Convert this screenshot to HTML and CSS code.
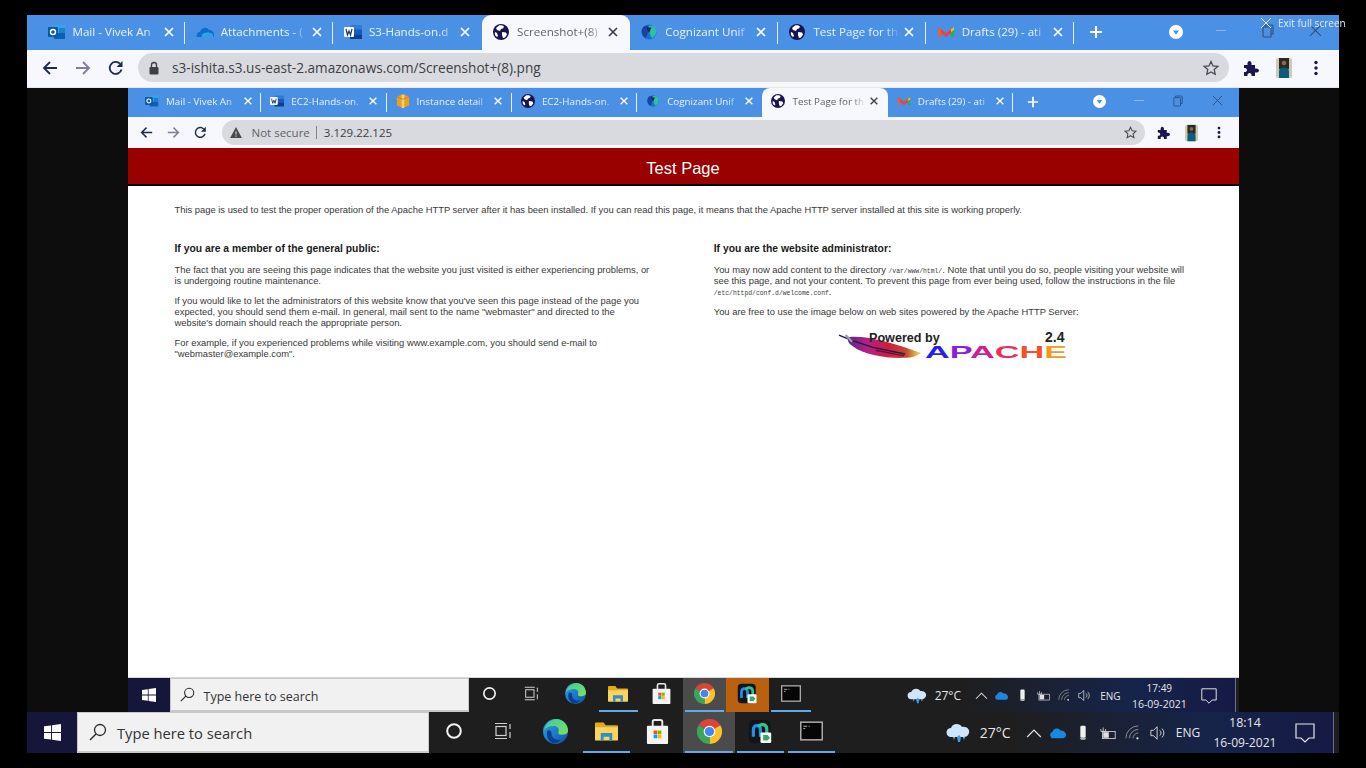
FILE: index.html
```html
<!DOCTYPE html>
<html lang="en">
<head>
<meta charset="utf-8">
<title>Screenshot+(8).png</title>
<link rel="stylesheet" href="styles.css">
</head>
<body>
<svg class="defs" aria-hidden="true">
  <defs>
    <linearGradient id="g-edge" x1="0" y1="0" x2="1" y2="1"><stop offset="0" stop-color="#2ba5e0"/><stop offset=".55" stop-color="#1c78c8"/><stop offset="1" stop-color="#0f4f9e"/></linearGradient>
    <linearGradient id="g-edge2" x1="0" y1="0" x2="1" y2="1"><stop offset="0" stop-color="#3fc9a8"/><stop offset="1" stop-color="#7fe05a"/></linearGradient>
    <linearGradient id="g-feather" x1="0" y1="0" x2="1" y2="0"><stop offset="0" stop-color="#5a2a80"/><stop offset=".25" stop-color="#b0208a"/><stop offset=".55" stop-color="#d01c3c"/><stop offset=".8" stop-color="#c84a30"/><stop offset=".92" stop-color="#d8b040"/><stop offset="1" stop-color="#e0d890"/></linearGradient>
    <symbol id="i-x" viewBox="0 0 12 12"><path d="M2 2l8 8M10 2l-8 8" fill="none" stroke="currentColor" stroke-width="1.7"/></symbol>
    <symbol id="i-thin-x" viewBox="0 0 12 12"><path d="M1 1l10 10M11 1L1 11" fill="none" stroke="currentColor" stroke-width="1"/></symbol>
    <symbol id="i-plus" viewBox="0 0 14 14"><path d="M7 1v12M1 7h12" fill="none" stroke="currentColor" stroke-width="2"/></symbol>
    <symbol id="i-outlook" viewBox="0 0 18 16"><rect x="6" y="1" width="11" height="14" rx="1" fill="#38a5e8"/><rect x="11" y="4" width="6" height="5" fill="#1c7fd0"/><rect x="6" y="9" width="11" height="6" fill="#0f5fb0"/><rect x="0" y="3" width="10" height="10" rx="1" fill="#0c5aa6"/><circle cx="5" cy="8" r="2.5" fill="none" stroke="#fff" stroke-width="1.4"/></symbol>
    <symbol id="i-onedrive" viewBox="0 0 18 16"><path d="M1 13c-1-3 1-5 3-5 1-4 6-6 9-2 3 0 5 2 5 5 0 1-.4 2-1 2z" fill="#0f6cc8"/><path d="M6 13c-1-2 1-4 3-4 2-1 4-1 5 0 2 0 4 2 3 4z" fill="#2fa1e6"/></symbol>
    <symbol id="i-word" viewBox="0 0 18 16"><rect x="6" y="1" width="12" height="14" rx="1" fill="#2b7cd3"/><rect x="6" y="5.5" width="12" height="5" fill="#185abd"/><rect x="6" y="10.5" width="12" height="4.5" fill="#103f91"/><rect x="0" y="3" width="10" height="10" rx="1" fill="#fff"/><path d="M2 5l1.5 6L5 7l1.500 4L8 5" fill="none" stroke="#10357f" stroke-width="1.2"/></symbol>
    <symbol id="i-globe" viewBox="0 0 16 16"><circle cx="8" cy="8" r="8" fill="#17144f"/><path d="M6 1.500c2-.5 4 0 5 1l-1 2-2 .5-1 2-3-1-1-2zM9 8l4 .5 1 2-2 3-2 .500-1-3zM2 8l2 1 1 3-1 1c-2-1-2.500-3-2-5z" fill="#fff"/></symbol>
    <symbol id="i-cognizant" viewBox="0 0 18 16"><circle cx="9" cy="8" r="7.500" fill="#1f6fd0"/><path d="M2 5c1-3 4-4 6-3 1 3 0 8-2 12-3-1-5-5-4-9z" fill="#17459c"/><path d="M9 2c3-1 6 0 7 3 1 4-1 8-4 9-2-3-4-8-3-12z" fill="#2fc0a0"/><path d="M6.500 3.500h5L9 9z" fill="#10205a"/></symbol>
    <symbol id="i-gmail" viewBox="0 0 18 16"><path d="M1 3l8 6 8-6v4l-8 6-8-6z" fill="#ea4335"/><path d="M1 3v10h3V5.300z" fill="#e8603a"/><path d="M17 3v10h-3V5.300z" fill="#34a853"/><path d="M14 5.300L17 3v3l-3 2z" fill="#fbbc04"/></symbol>
    <symbol id="i-aws" viewBox="0 0 16 16"><path d="M8 0l7 3v10l-7 3-7-3V3z" fill="#e8a020"/><path d="M6.500 1v15h3V1z" fill="#f6d070"/><path d="M1 3l7 3 7-3" fill="none" stroke="#c8801a"/></symbol>
    <symbol id="i-back" viewBox="0 0 16 16"><path d="M15 8H2M8 2L2 8l6 6" fill="none" stroke="currentColor" stroke-width="1.800"/></symbol>
    <symbol id="i-fwd" viewBox="0 0 16 16"><path d="M1 8h13M8 2l6 6-6 6" fill="none" stroke="currentColor" stroke-width="1.800"/></symbol>
    <symbol id="i-reload" viewBox="0 0 16 16"><path d="M13.500 9.500A6 6 0 1 1 12 3.700" fill="none" stroke="currentColor" stroke-width="1.800"/><path d="M14.500 1v6h-6z" fill="currentColor"/></symbol>
    <symbol id="i-lock" viewBox="0 0 12 14"><rect x="1.500" y="6" width="9" height="7.500" rx="1" fill="currentColor"/><path d="M3.500 6V4a2.500 2.500 0 0 1 5 0v2" fill="none" stroke="currentColor" stroke-width="1.300"/></symbol>
    <symbol id="i-warn" viewBox="0 0 14 13"><path d="M7 0l7 13H0z" fill="currentColor"/><path d="M7 5v4M7 10v1.500" stroke="#d9dadf" stroke-width="1.200"/></symbol>
    <symbol id="i-star" viewBox="0 0 16 16"><path d="M8 1.500l2 4.400 4.800.5-3.600 3.200 1 4.700L8 11.900l-4.200 2.400 1-4.700L1.200 6.400 6 5.900z" fill="none" stroke="currentColor" stroke-width="1.300"/></symbol>
    <symbol id="i-puzzle" viewBox="0 0 16 16"><path d="M1 5h3.500C4 2 5.500 1 6.500 1S9 2 8.500 5H12v3.500c3-.5 4 1 4 2s-1 2.500-4 2V16H8.500c.5-2-1-3-2-3s-2.500 1-2 3H1v-4c2 .5 3-1 3-2S3 7.500 1 8z" fill="#1e1450"/></symbol>
    <symbol id="i-avatar" viewBox="0 0 16 20"><rect width="16" height="20" rx="2" fill="#cfcab2"/><rect x="3" y="0" width="10" height="11" fill="#2c2a20"/><circle cx="8" cy="5" r="2.300" fill="#8a6a54"/><path d="M3 20v-7c0-2 2-3.500 5-3.500s5 1.500 5 3.500v7z" fill="#0f5a80"/></symbol>
    <symbol id="i-dots" viewBox="0 0 4 16"><circle cx="2" cy="2.500" r="1.700" fill="#1e1450"/><circle cx="2" cy="8" r="1.700" fill="#1e1450"/><circle cx="2" cy="13.500" r="1.700" fill="#1e1450"/></symbol>
    <symbol id="i-down" viewBox="0 0 14 14"><circle cx="7" cy="7" r="7" fill="#fff"/><path d="M4 5.500h6L7 9.500z" fill="#4a90e5"/></symbol>
    <symbol id="i-restore" viewBox="0 0 12 14"><rect x="1" y="3" width="8" height="10" rx="1" fill="none" stroke="currentColor" stroke-width="1.100"/><path d="M3 3V1h7a1 1 0 0 1 1 1v8H9" fill="none" stroke="currentColor" stroke-width="1.100"/></symbol>
    <symbol id="i-win" viewBox="0 0 18 18"><path d="M0 2.500l7.500-1v7H0zM8.500 1.300L18 0v8.500H8.500zM0 9.500h7.500v7l-7.500-1zM8.500 9.500H18V18l-9.500-1.300z" fill="#fff"/></symbol>
    <symbol id="i-search" viewBox="0 0 18 18"><circle cx="11" cy="7" r="5.500" fill="none" stroke="#2a2a2a" stroke-width="1.300"/><path d="M7 11l-6 6" stroke="#2a2a2a" stroke-width="1.500"/></symbol>
    <symbol id="i-cortana" viewBox="0 0 18 18"><circle cx="9" cy="9" r="6.800" fill="none" stroke="#f2f2f2" stroke-width="2"/></symbol>
    <symbol id="i-taskview" viewBox="0 0 18 18"><path d="M1 1.500h12M1 16.500h12" stroke="#d0d0d0" stroke-width="1.200"/><rect x="2" y="4.500" width="10" height="9" fill="none" stroke="#d0d0d0" stroke-width="1.200"/><path d="M16 2v5M16 10v6" stroke="#d0d0d0" stroke-width="1.200"/></symbol>
    <symbol id="i-edge" viewBox="0 0 24 24"><circle cx="12" cy="12" r="12" fill="url(#g-edge)"/><path d="M1 11C3 3 9 0 13 0c6 0 11 5 11 11 0 3-3 4-6 4-3 0-4-1-3-3 1-3-2-6-6-5-4 0-7 2-8 4z" fill="url(#g-edge2)"/><path d="M8 13c0 5 4 8 9 7-2 3-5 4-8 3-4-2-6-6-5-11 1-2 4-1 4 1z" fill="#0c3f8f"/></symbol>
    <symbol id="i-folder" viewBox="0 0 24 20"><path d="M0 2a1 1 0 0 1 1-1h8l2 3h12a1 1 0 0 1 1 1v2H0z" fill="#e5a823"/><path d="M0 6h24v13a1 1 0 0 1-1 1H1a1 1 0 0 1-1-1z" fill="#fcd35e"/><path d="M6 12h12v8h-3v-4H9v4H6z" fill="#2e8fd0"/></symbol>
    <symbol id="i-store" viewBox="0 0 24 26"><path d="M7 8V3a2 2 0 0 1 2-2h6a2 2 0 0 1 2 2v5" fill="none" stroke="#e8e8e8" stroke-width="2"/><rect x="1" y="7" width="22" height="19" rx="1" fill="#f4f4f4"/><rect x="8" y="12" width="3.800" height="3.800" fill="#f25022"/><rect x="12.200" y="12" width="3.800" height="3.800" fill="#7fba00"/><rect x="8" y="16.200" width="3.800" height="3.800" fill="#00a4ef"/><rect x="12.200" y="16.200" width="3.800" height="3.800" fill="#ffb900"/></symbol>
    <symbol id="i-chrome" viewBox="0 0 24 24"><path d="M12 12L1.600 6A12 12 0 0 1 22.400 6z" fill="#db4437"/><path d="M12 12L22.400 6A12 12 0 0 1 12 24z" fill="#fbc02d"/><path d="M12 12L12 24A12 12 0 0 1 1.600 6z" fill="#3aa757"/><circle cx="12" cy="12" r="5.600" fill="#fff"/><circle cx="12" cy="12" r="4.400" fill="#4285f4"/></symbol>
    <symbol id="i-webex" viewBox="0 0 26 28"><rect y="1" width="24" height="26" rx="5" fill="#141418"/><path d="M5 20V12c0-6 8-6 8 0v8" fill="none" stroke="#1f8fe8" stroke-width="3.600"/><path d="M11 9c1-4 9-4 9 2v5" fill="none" stroke="#2fc48e" stroke-width="3.600"/><rect x="13" y="15" width="12" height="12" rx="1.500" fill="#fff"/><path d="M16 18h5l2.500 3-2.500 3h-5z" fill="#2faa68"/></symbol>
    <symbol id="i-cmd" viewBox="0 0 24 20"><rect x=".8" y=".8" width="22.400" height="18.400" fill="#060606" stroke="#a8a8a8" stroke-width="1.600"/><path d="M3.500 5h4M9 5h1M3.500 7.500h2" stroke="#bdbdbd"/></symbol>
    <symbol id="i-weather" viewBox="0 0 24 22"><path d="M5 15a4.500 4.500 0 0 1 0-9c1-4 8-6 11-1 5-1 8 3 7 6-1 3-3 4-5 4z" fill="#cfe6fa"/><path d="M11 15l2-2 2 2-1 5h-2z" fill="#3f9be8"/><path d="M7 15h2l-1 3zM17 15h2l-1 3z" fill="#6fb4ee"/></symbol>
    <symbol id="i-caret" viewBox="0 0 14 9"><path d="M1 8l6-6 6 6" fill="none" stroke="#e0e0e0" stroke-width="1.100"/></symbol>
    <symbol id="i-cloud" viewBox="0 0 20 13"><path d="M4 13a4 4 0 0 1-1-7.800C4 1 10-1 13 3.500c4-.5 7 2.500 7 5.500 0 2.500-2 4-4 4z" fill="#1d87e0"/></symbol>
    <symbol id="i-usb" viewBox="0 0 10 24"><rect x="1" y="1" width="8" height="18" rx="2" fill="#f0f0f0"/><path d="M0 19h10l-2 3H2z" fill="#b8b8b8"/></symbol>
    <symbol id="i-battery" viewBox="0 0 20 16"><path d="M4 1v5M1 3v3h6V3" stroke="#e0e0e0" fill="none"/><rect x="3" y="6" width="16" height="9" fill="none" stroke="#e0e0e0"/><rect x="4" y="7" width="7" height="7" fill="#e0e0e0"/></symbol>
    <symbol id="i-wifi" viewBox="0 0 18 18"><path d="M1 15A14 14 0 0 1 15 1M5 15a10 10 0 0 1 10-10M9 15a6 6 0 0 1 6-6" fill="none" stroke="#9a9a9a" stroke-width="1"/><circle cx="14" cy="15" r="1.300" fill="#e0e0e0"/></symbol>
    <symbol id="i-vol" viewBox="0 0 18 18"><path d="M1 6h3l4-4v14l-4-4H1z" fill="none" stroke="#e0e0e0"/><path d="M11 6a4 4 0 0 1 0 6M13.500 4a7 7 0 0 1 0 10" fill="none" stroke="#e0e0e0"/></symbol>
    <symbol id="i-notif" viewBox="0 0 20 20"><path d="M1 1h18v14h-5l-4 4-4-4H1z" fill="none" stroke="#e8e8e8" stroke-width="1.200"/></symbol>
    <symbol id="i-feather" viewBox="0 0 90 28"><path d="M12 5C30 3 62 12 88 22c-4 3-10 5-16 5C52 28 28 24 16 15 11 12 9 8 12 5z" fill="url(#g-feather)"/><path d="M1 3l12 5 24 8 34 7" fill="none" stroke="#201a40" stroke-width="1.500"/><path d="M8 3l7 7" stroke="#9a9ab0" stroke-width="2.500"/><path d="M40 19l30 6" stroke="#5a1050" stroke-width="1.500"/></symbol>
  </defs>
</svg>

<div class="screen">
  <div class="exit-full"><svg class="exit-x"><use href="#i-thin-x"/></svg><span>Exit full screen</span></div>

  <div class="frame">
    <div class="tabbar">
      <div class="tab"><svg class="tab-icon"><use href="#i-outlook"/></svg><span class="tab-title">Mail - Vivek An</span><svg class="tab-x"><use href="#i-x"/></svg></div>
      <div class="tab"><svg class="tab-icon"><use href="#i-onedrive"/></svg><span class="tab-title">Attachments - (</span><svg class="tab-x"><use href="#i-x"/></svg></div>
      <div class="tab tab-noline"><svg class="tab-icon"><use href="#i-word"/></svg><span class="tab-title">S3-Hands-on.d</span><svg class="tab-x"><use href="#i-x"/></svg></div>
      <div class="tab tab-active"><svg class="tab-icon"><use href="#i-globe"/></svg><span class="tab-title">Screenshot+(8)</span><svg class="tab-x"><use href="#i-x"/></svg></div>
      <div class="tab"><svg class="tab-icon"><use href="#i-cognizant"/></svg><span class="tab-title">Cognizant Unif</span><svg class="tab-x"><use href="#i-x"/></svg></div>
      <div class="tab"><svg class="tab-icon"><use href="#i-globe"/></svg><span class="tab-title">Test Page for th</span><svg class="tab-x"><use href="#i-x"/></svg></div>
      <div class="tab"><svg class="tab-icon"><use href="#i-gmail"/></svg><span class="tab-title">Drafts (29) - ati</span><svg class="tab-x"><use href="#i-x"/></svg></div>
      <svg class="plus"><use href="#i-plus"/></svg>
      <svg class="profile-down"><use href="#i-down"/></svg>
      <div class="winctl"><span class="min"></span></div>
      <div class="winctl"><svg class="restore"><use href="#i-restore"/></svg></div>
      <div class="winctl"><svg class="close"><use href="#i-thin-x"/></svg></div>
    </div>
    <div class="toolbar">
      <svg class="nav"><use href="#i-back"/></svg>
      <svg class="nav nav-off"><use href="#i-fwd"/></svg>
      <svg class="nav"><use href="#i-reload"/></svg>
      <div class="omnibox">
        <svg class="lock"><use href="#i-lock"/></svg>
        <span class="url">s3-ishita.s3.us-east-2.amazonaws.com/Screenshot+(8).png</span>
        <svg class="star"><use href="#i-star"/></svg>
      </div>
      <svg class="puzzle"><use href="#i-puzzle"/></svg>
      <svg class="avatar"><use href="#i-avatar"/></svg>
      <svg class="dots"><use href="#i-dots"/></svg>
    </div>

    <div class="stage">
      <div class="inner">
        <div class="tabbar">
          <div class="tab"><svg class="tab-icon"><use href="#i-outlook"/></svg><span class="tab-title">Mail - Vivek An</span><svg class="tab-x"><use href="#i-x"/></svg></div>
          <div class="tab"><svg class="tab-icon"><use href="#i-word"/></svg><span class="tab-title">EC2-Hands-on.</span><svg class="tab-x"><use href="#i-x"/></svg></div>
          <div class="tab"><svg class="tab-icon"><use href="#i-aws"/></svg><span class="tab-title">Instance detail</span><svg class="tab-x"><use href="#i-x"/></svg></div>
          <div class="tab"><svg class="tab-icon"><use href="#i-globe"/></svg><span class="tab-title">EC2-Hands-on.</span><svg class="tab-x"><use href="#i-x"/></svg></div>
          <div class="tab tab-noline"><svg class="tab-icon"><use href="#i-cognizant"/></svg><span class="tab-title">Cognizant Unif</span><svg class="tab-x"><use href="#i-x"/></svg></div>
          <div class="tab tab-active"><svg class="tab-icon"><use href="#i-globe"/></svg><span class="tab-title">Test Page for th</span><svg class="tab-x"><use href="#i-x"/></svg></div>
          <div class="tab"><svg class="tab-icon"><use href="#i-gmail"/></svg><span class="tab-title">Drafts (29) - ati</span><svg class="tab-x"><use href="#i-x"/></svg></div>
          <svg class="plus"><use href="#i-plus"/></svg>
          <svg class="profile-down"><use href="#i-down"/></svg>
          <div class="winctl"><span class="min"></span></div>
          <div class="winctl"><svg class="restore"><use href="#i-restore"/></svg></div>
          <div class="winctl"><svg class="close"><use href="#i-thin-x"/></svg></div>
        </div>
        <div class="toolbar">
          <svg class="nav"><use href="#i-back"/></svg>
          <svg class="nav nav-off"><use href="#i-fwd"/></svg>
          <svg class="nav"><use href="#i-reload"/></svg>
          <div class="omnibox">
            <svg class="lock"><use href="#i-warn"/></svg>
            <span class="not-secure">Not secure</span>
            <span class="url">3.129.22.125</span>
            <svg class="star"><use href="#i-star"/></svg>
          </div>
          <svg class="puzzle"><use href="#i-puzzle"/></svg>
          <svg class="avatar"><use href="#i-avatar"/></svg>
          <svg class="dots"><use href="#i-dots"/></svg>
        </div>

        <header class="page-head"><h1>Test Page</h1></header>
        <main class="page">
          <p class="lead">This page is used to test the proper operation of the Apache HTTP server after it has been installed. If you can read this page, it means that the Apache HTTP server installed at this site is working properly.</p>
          <div class="cols">
            <section class="col col-left">
              <h2>If you are a member of the general public:</h2>
              <p>The fact that you are seeing this page indicates that the website you just visited is either experiencing problems, or is undergoing routine maintenance.</p>
              <p>If you would like to let the administrators of this website know that you've seen this page instead of the page you expected, you should send them e-mail. In general, mail sent to the name "webmaster" and directed to the website's domain should reach the appropriate person.</p>
              <p>For example, if you experienced problems while visiting www.example.com, you should send e-mail to "webmaster@example.com".</p>
            </section>
            <section class="col col-right">
              <h2>If you are the website administrator:</h2>
              <p>You may now add content to the directory <code>/var/www/html/</code>. Note that until you do so, people visiting your website will see this page, and not your content. To prevent this page from ever being used, follow the instructions in the file <code>/etc/httpd/conf.d/welcome.conf</code>.</p>
              <p>You are free to use the image below on web sites powered by the Apache HTTP Server:</p>
              <svg class="powered" viewBox="0 0 230 31">
                <use href="#i-feather" x="0" y="2" width="85" height="27"/>
                <text x="31" y="12" class="pw-text">Powered by</text>
                <text x="207" y="12" class="pw-ver">2.4</text>
                <text x="87" y="28" class="pw-apache" textLength="142" lengthAdjust="spacingAndGlyphs"><tspan fill="#2a1fe8">A</tspan><tspan fill="#8a20d8">P</tspan><tspan fill="#c8209a">A</tspan><tspan fill="#e8305a">C</tspan><tspan fill="#f0502a">H</tspan><tspan fill="#f09a20">E</tspan></text>
              </svg>
            </section>
          </div>
        </main>

        <div class="taskbar">
          <div class="tb-start"><svg class="tb-win"><use href="#i-win"/></svg></div>
          <div class="tb-search"><svg class="tb-mag"><use href="#i-search"/></svg><span>Type here to search</span></div>
          <div class="tb-slot tb-sys"><svg class="ic-sm"><use href="#i-cortana"/></svg></div>
          <div class="tb-slot tb-sys"><svg class="ic-sm"><use href="#i-taskview"/></svg></div>
          <div class="tb-slot tb-gap"><svg class="ic"><use href="#i-edge"/></svg></div>
          <div class="tb-slot tb-on"><svg class="ic-wide"><use href="#i-folder"/></svg></div>
          <div class="tb-slot"><svg class="ic"><use href="#i-store"/></svg></div>
          <div class="tb-slot tb-on tb-lit"><svg class="ic"><use href="#i-chrome"/></svg></div>
          <div class="tb-slot tb-orange"><svg class="ic"><use href="#i-webex"/></svg></div>
          <div class="tb-slot tb-on"><svg class="ic-wide"><use href="#i-cmd"/></svg></div>
          <div class="tray">
            <svg class="tr-weather"><use href="#i-weather"/></svg>
            <span class="tr-temp">27°C</span>
            <svg class="tr-ic"><use href="#i-caret"/></svg>
            <svg class="tr-ic"><use href="#i-cloud"/></svg>
            <svg class="tr-ic"><use href="#i-usb"/></svg>
            <svg class="tr-ic"><use href="#i-battery"/></svg>
            <svg class="tr-ic"><use href="#i-wifi"/></svg>
            <svg class="tr-ic"><use href="#i-vol"/></svg>
            <span class="tr-lang">ENG</span>
            <span class="tr-clock"><span>17:49</span><span class="tr-date">16-09-2021</span></span>
            <svg class="tr-notif"><use href="#i-notif"/></svg>
          </div>
        </div>
      </div>
    </div>

    <div class="taskbar">
      <div class="tb-start"><svg class="tb-win"><use href="#i-win"/></svg></div>
      <div class="tb-search"><svg class="tb-mag"><use href="#i-search"/></svg><span>Type here to search</span></div>
      <div class="tb-slot tb-sys"><svg class="ic-sm"><use href="#i-cortana"/></svg></div>
      <div class="tb-slot tb-sys"><svg class="ic-sm"><use href="#i-taskview"/></svg></div>
      <div class="tb-slot tb-gap"><svg class="ic"><use href="#i-edge"/></svg></div>
      <div class="tb-slot tb-on"><svg class="ic-wide"><use href="#i-folder"/></svg></div>
      <div class="tb-slot"><svg class="ic"><use href="#i-store"/></svg></div>
      <div class="tb-slot tb-on tb-lit"><svg class="ic"><use href="#i-chrome"/></svg></div>
      <div class="tb-slot tb-on"><svg class="ic"><use href="#i-webex"/></svg></div>
      <div class="tb-slot tb-on"><svg class="ic-wide"><use href="#i-cmd"/></svg></div>
      <div class="tray">
        <svg class="tr-weather"><use href="#i-weather"/></svg>
        <span class="tr-temp">27°C</span>
        <svg class="tr-ic"><use href="#i-caret"/></svg>
        <svg class="tr-ic"><use href="#i-cloud"/></svg>
        <svg class="tr-ic"><use href="#i-usb"/></svg>
        <svg class="tr-ic"><use href="#i-battery"/></svg>
        <svg class="tr-ic"><use href="#i-wifi"/></svg>
        <svg class="tr-ic"><use href="#i-vol"/></svg>
        <span class="tr-lang">ENG</span>
        <span class="tr-clock"><span>18:14</span><span class="tr-date">16-09-2021</span></span>
        <svg class="tr-notif"><use href="#i-notif"/></svg>
      </div>
    </div>
  </div>
</div>
</body>
</html>
```

FILE: styles.css
```css
* { box-sizing: border-box; }
html, body { margin: 0; padding: 0; height: 100%; background: #000; overflow: hidden; }
.defs { display: block; width: 0; height: 0; }
svg { display: block; flex: none; }

.screen {
  position: relative;
  height: 768px;
  padding: 15px 27px 0;
  font-family: "Open Sans", "Noto Sans", sans-serif;
  filter: blur(0.5px);
}
.frame { width: 1312px; }

/* ---- browser chrome (outer sizes) ---- */
.tabbar {
  display: flex;
  align-items: stretch;
  height: 35px;
  padding-left: 10px;
  background: #4a91e6;
  color: #fff;
}
.tab {
  position: relative;
  display: flex;
  align-items: center;
  flex: none;
  width: 148.2px;
  padding: 0 10.7px 2px 10.5px;
  gap: 7px;
  font-size: 11.6px;
}
.tab::after {
  content: "";
  position: absolute;
  right: 0;
  top: 7px;
  bottom: 6px;
  width: 1px;
  background: #e8f0fb;
}
.tab-noline::after, .tab-active::after { display: none; }
.tab-active {
  background: #f6f8fd;
  border-radius: 9px 9px 0 0;
  color: #3c4043;
}
.tab-icon { width: 18px; height: 16px; }
.tab-title {
  flex: 1;
  min-width: 0;
  overflow: hidden;
  white-space: nowrap;
  color: #e9f1fb;
  -webkit-mask-image: linear-gradient(90deg, #000 82%, transparent 100%);
  mask-image: linear-gradient(90deg, #000 82%, transparent 100%);
}
.tab-active .tab-title { color: #5f6368; }
.tab-x { width: 12px; height: 12px; margin-left: -4px; color: #fff; }
.tab-active .tab-x { color: #3a3f55; }
.plus { width: 14px; height: 14px; margin: 10px 0 0 14.5px; color: #fff; }
.profile-down { width: 14px; height: 14px; margin: 10px 14.25px 0 66px; }
.winctl {
  display: flex;
  align-items: center;
  justify-content: center;
  width: 47.5px;
  color: #33507a;
  padding-bottom: 4px;
}
.min { display: block; width: 10px; height: 1px; background: #8fb4e6; }
.restore { width: 12px; height: 14px; color: #2f4f7f; }
.close { width: 13px; height: 13px; color: #2f4f7f; }

.toolbar {
  display: flex;
  align-items: center;
  height: 37.5px;
  background: #f6f8fd;
  color: #1e1a48;
  border-bottom: 1px solid #e6e8ee;
  padding-bottom: 1px;
}
.nav { width: 16px; height: 16px; margin-left: 14.5px; margin-right: 2.5px; color: #1e2a50; }
.nav-off { color: #7c8096; }
.omnibox {
  display: flex;
  align-items: center;
  width: 1091px;
  height: 29px;
  margin-left: 12px;
  padding: 0 10px;
  border-radius: 15px;
  background: #d9dadf;
  font-size: 13.6px;
}
.lock { width: 12px; height: 14px; margin-right: 12px; color: #3c4043; }
.url { flex: 1; color: #3c4043; white-space: nowrap; }
.star { width: 16px; height: 16px; color: #4a4a55; }
.puzzle { width: 16px; height: 16px; margin-left: 14px; }
.avatar { width: 16px; height: 22px; margin-left: 17px; }
.dots { width: 4px; height: 16px; margin-left: 22px; }

/* ---- stage holding the photographed window ---- */
.stage {
  height: 624.5px;
  padding: 0 100.5px;
  background: #0d0d0d;
}
.inner { display: flex; flex-direction: column; height: 100%; }
.inner .tabbar { height: 29.5px; padding-left: 8.5px; background: #4a91e6; }
.inner .tab { width: 125.3px; padding: 0 8.5px 2px 9px; gap: 7px; font-size: 9.8px; }
.inner .tab::after { top: 5px; bottom: 5px; }
.inner .tab-active { border-radius: 8px 8px 0 0; }
.inner .tab-icon { width: 14px; height: 14px; }
.inner .tab-x { width: 10px; height: 10px; }
.inner .plus { width: 12px; height: 12px; margin: 8px 0 0 13.5px; }
.inner .profile-down { width: 13px; height: 13px; margin: 7px 12.75px 0 54.5px; }
.inner .winctl { width: 39.5px; padding-bottom: 3px; }
.inner .restore { width: 10px; height: 12px; }
.inner .close { width: 11px; height: 11px; }

.inner .toolbar { height: 31px; border-bottom: 0; padding: 0; }
.inner .nav { width: 13px; height: 13px; margin-left: 12px; margin-right: 2px; }
.inner .omnibox { width: 923px; height: 25px; margin-left: 13px; padding: 0 8px; font-size: 11.5px; }
.inner .lock { width: 12px; height: 11px; margin-right: 10px; color: #4a4a4a; }
.not-secure { color: #5f6368; padding-right: 6px; margin-right: 7px; border-right: 1px solid #80838a; line-height: 13px; }
.inner .star { width: 13px; height: 13px; }
.inner .puzzle { width: 13px; height: 13px; margin-left: 12px; }
.inner .avatar { width: 13px; height: 18px; margin-left: 15px; }
.inner .dots { width: 4px; height: 13px; margin-left: 19px; }

/* ---- Apache test page ---- */
.page-head {
  height: 38px;
  padding-top: 3px;
  background: #990000;
  border-bottom: 2px solid #000;
  display: flex;
  align-items: center;
  justify-content: center;
}
.page-head h1 { margin: 0; font: 400 16.5px/20px "Liberation Sans", Arial, sans-serif; color: #fff; }
.page {
  flex: 1;
  padding: 19px 47px 0;
  background: #fff;
  border-bottom: 1px solid #d8d8d8;
  font: 9.38px/11px "Liberation Sans", Arial, sans-serif;
  color: #383838;
}
.page p { margin: 0 0 9px; }
.page .lead { margin: 0 0 26px; white-space: nowrap; }
.cols { display: flex; }
.col-left { width: 476px; }
.col-right { width: 478px; margin-left: 63.5px; }
.page h2 { margin: 0 0 10px; font: 700 10.35px/13px "Liberation Sans", Arial, sans-serif; color: #1a1a1a; }
.page code { font: 6.4px/0 "Liberation Mono", monospace; }
.powered { width: 230px; height: 31px; margin: 12px 0 0 124px; }
.pw-text { font: 700 12.6px "Liberation Sans", Arial, sans-serif; fill: #222; }
.pw-ver { font: 700 14px "Liberation Sans", Arial, sans-serif; fill: #222; }
.pw-apache { font: 700 17px "Liberation Sans", Arial, sans-serif; }

/* ---- windows taskbar (outer sizes) ---- */
.taskbar {
  display: flex;
  align-items: stretch;
  height: 41px;
  background: #1e1e1e;
}
.tb-start {
  display: flex;
  align-items: center;
  justify-content: center;
  width: 50px;
  background: #16163a;
}
.tb-win { width: 17px; height: 17px; }
.tb-search {
  display: flex;
  align-items: center;
  width: 352px;
  padding: 2px 0 0 11px;
  background: #f1f1f1;
  border: 1px solid #c8c8c8;
  border-bottom-width: 2px;
  color: #333;
  font-size: 14.7px;
  gap: 10px;
}
.tb-mag { width: 18px; height: 18px; margin-top: -3px; }
.tb-slot {
  position: relative;
  display: flex;
  align-items: center;
  justify-content: center;
  width: 51.3px;
  padding-bottom: 3px;
}
.tb-sys { width: 49.5px; }
.tb-gap { margin-left: 1.5px; }
.tb-on::after {
  content: "";
  position: absolute;
  left: 2px;
  right: 2px;
  bottom: 0;
  height: 2px;
  background: #62a9e8;
}
.tb-lit { background: #4b4b4b; }
.ic { width: 25px; height: 25px; }
.ic-wide { width: 23px; height: 20px; }
.ic-sm { width: 18px; height: 18px; }
.tray {
  flex: 1;
  display: flex;
  align-items: center;
  padding-left: 102px;
  padding-right: 6px;
  color: #e6e6e6;
  background: linear-gradient(90deg, #1e1e1e 0, #1e1e1e 35%, #16244a 75%, #161a44 100%);
  border-right: 1px solid #6a6f90;
  margin-right: 5px;
  font-size: 14px;
}
.tr-weather { width: 24px; height: 22px; margin: 0 9.5px 0 7px; }
.tr-temp { width: 41.5px; }
.tr-ic { width: 16px; height: 16px; margin: 0 4.4px; }
.tr-lang { width: 36px; text-align: center; font-size: 12px; }
.tr-clock {
  display: flex;
  flex-direction: column;
  align-items: center;
  width: 78px;
  font-size: 12.5px;
  line-height: 19.5px;
}
.tr-date { font-size: 12.1px; white-space: nowrap; }
.tr-notif { width: 20px; height: 20px; margin-left: 11px; }

/* ---- taskbar inside the photographed window ---- */
.inner .taskbar { height: 34px; flex: none; }
.inner .tb-start { width: 42px; }
.inner .tb-win { width: 14px; height: 14px; }
.inner .tb-search { width: 299px; padding: 3px 0 0 9px; font-size: 12.5px; gap: 9px; }
.inner .tb-mag { width: 15px; height: 15px; }
.inner .tb-slot { width: 43.2px; }
.inner .tb-sys { width: 42px; }
.inner .tb-gap { margin-left: 1px; }
.inner .tb-orange { background: #b9610f; }
.inner .ic { width: 21px; height: 21px; }
.inner .ic-wide { width: 20px; height: 17px; }
.inner .ic-sm { width: 15px; height: 15px; }
.inner .tray { padding: 1px 6px 0 94px; margin-right: 3px; font-size: 12px; }
.inner .tr-weather { width: 20px; height: 18px; margin: 0 8px 0 0; }
.inner .tr-temp { width: 36px; }
.inner .tr-ic { width: 13px; height: 13px; margin: 0 3.9px; }
.inner .tr-lang { width: 30px; font-size: 10px; }
.inner .tr-clock { width: 68px; font-size: 10px; line-height: 16px; }
.inner .tr-date { font-size: 10.5px; }
.inner .tr-notif { width: 16px; height: 16px; margin-left: 8px; }

/* ---- overlay from the fullscreen browser ---- */
.exit-full {
  position: absolute;
  top: 16px;
  left: 1260px;
  display: flex;
  align-items: center;
  gap: 6px;
  font-size: 10px;
  color: #e4e8ee;
  white-space: nowrap;
}
.exit-x { width: 12px; height: 12px; color: #e4e8ee; }
```
